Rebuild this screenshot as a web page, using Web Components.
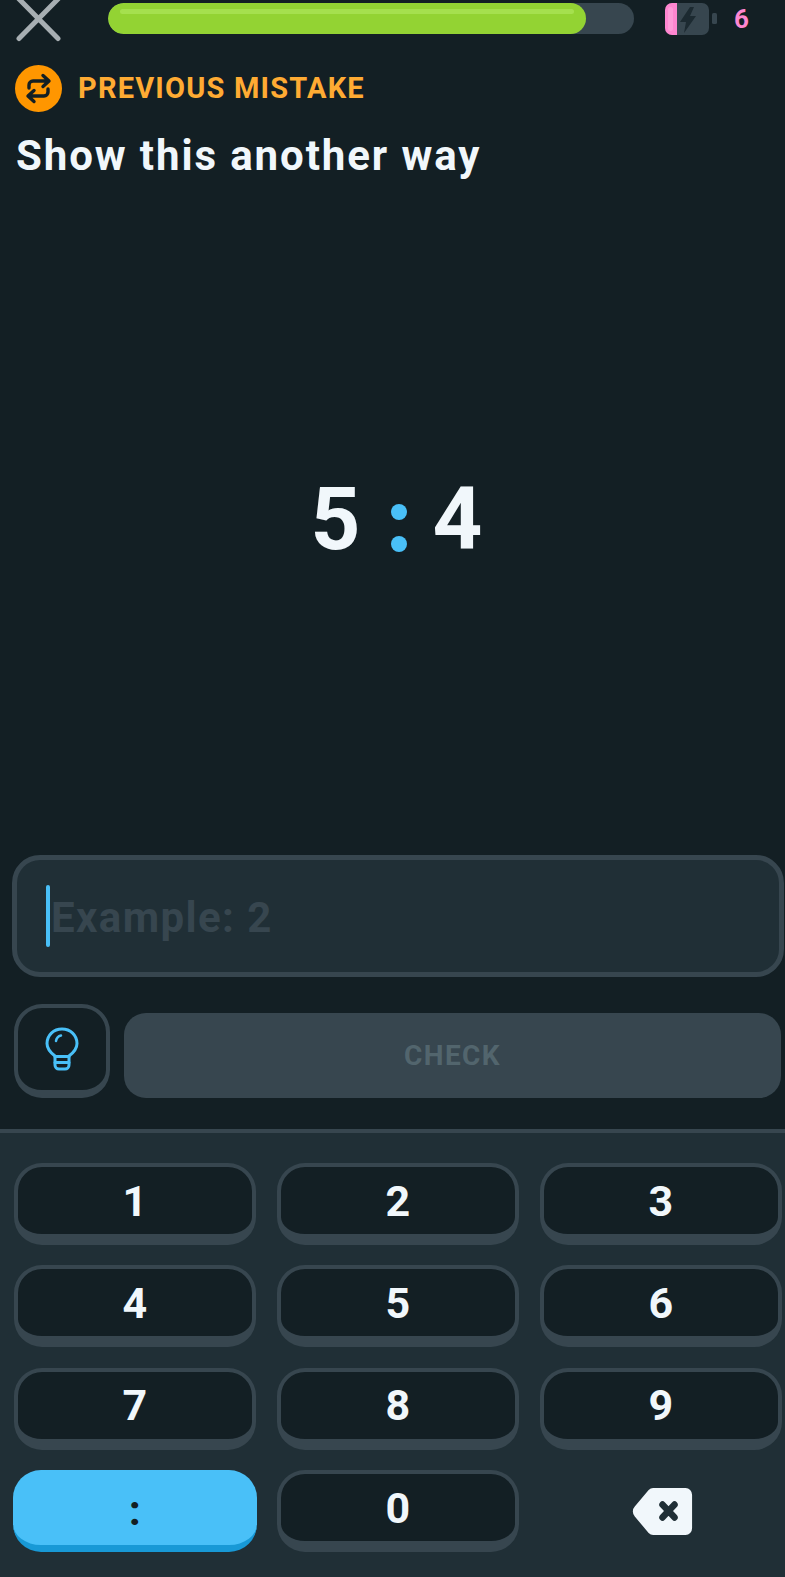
<!DOCTYPE html>
<html><head><meta charset="utf-8">
<style>
html,body{margin:0;padding:0;background:#131f24;}
body{width:785px;height:1577px;overflow:hidden;font-family:"Roboto","Liberation Sans",sans-serif;font-weight:700;}
</style></head><body>
<lesson-screen>
  <top-bar slot="top"></top-bar>
  <mistake-tag slot="top"></mistake-tag>
  <h-title slot="top">Show this another way</h-title>
  <ratio-display slot="mid"></ratio-display>
  <answer-input slot="bottom" placeholder="Example: 2"></answer-input>
  <action-row slot="bottom"></action-row>
  <num-pad slot="pad">
    <pad-key>1</pad-key><pad-key>2</pad-key><pad-key>3</pad-key>
    <pad-key>4</pad-key><pad-key>5</pad-key><pad-key>6</pad-key>
    <pad-key>7</pad-key><pad-key>8</pad-key><pad-key>9</pad-key>
    <pad-key active>:</pad-key><pad-key>0</pad-key><pad-key plain>
      <svg width="61" height="49" viewBox="0 0 66 50" preserveAspectRatio="none"><path d="M23 1H58a7 7 0 0 1 7 7V42a7 7 0 0 1-7 7H23a7 7 0 0 1-5-2L3 30a7 7 0 0 1 0-10L18 3a7 7 0 0 1 5-2Z" fill="#f1f7fb"/><path d="M33 18L46 31M46 18L33 31" stroke="#202f36" stroke-width="7" stroke-linecap="round"/></svg>
    </pad-key>
  </num-pad>
</lesson-screen>
<script>
function def(name, html){
  customElements.define(name, class extends HTMLElement{
    constructor(){super();this.attachShadow({mode:'open'}).innerHTML=typeof html==='function'?html(this):html;}
  });
}
def('lesson-screen',`<style>
:host{display:flex;flex-direction:column;width:785px;height:1577px;overflow:hidden}
.top{display:block;flex:none}
.mid{flex:1;display:flex;min-height:0}
.bottom{display:flex;flex-direction:column;flex:none}
</style>
<div class="top"><slot name="top"></slot></div>
<div class="mid"><slot name="mid"></slot></div>
<div class="bottom"><slot name="bottom"></slot></div>
<slot name="pad"></slot>`);
def('top-bar',`<style>
:host{display:flex;align-items:flex-start;height:42px;padding-left:16px;overflow:hidden}
svg{display:block;flex:none}
.x{margin-right:46px}
.track{width:526px;height:31px;margin-top:3px;border-radius:16px;background:#37464f;flex:none;overflow:hidden}
.fill{width:478px;height:100%;border-radius:16px;background:#93d333;position:relative}
.fill i{position:absolute;left:12px;right:12px;top:6px;height:5px;border-radius:3px;background:#a5e04e}
.bat{margin-left:31px;margin-top:3px}
.n{margin-left:16px;margin-top:1px;font-size:26px;line-height:36px;color:#ff86d0;font-family:"Roboto",sans-serif}
</style>
<svg class="x" width="46" height="42" viewBox="0 0 46 42"><path d="M3 38.500L42 -1M3 -1L42 38.500" stroke="#a7aeb2" stroke-width="5" stroke-linecap="round"/></svg>
<div class="track"><div class="fill"><i></i></div></div>
<svg class="bat" width="53" height="33" viewBox="0 0 53 33"><rect x="0" y="0" width="44" height="32" rx="7" fill="#37464f"/><path d="M7 0H12V32H7a7 7 0 0 1-7-7V7a7 7 0 0 1 7-7Z" fill="#ff86d0"/><rect x="3" y="4" width="5" height="24" rx="2.500" fill="#ffa8dd" opacity=".6"/><path d="M25 4L15 19H21L19 30L31 13H25L29 4Z" fill="#1c2a31"/><rect x="47" y="10" width="5" height="11" rx="1.500" fill="#37464f"/></svg>
<span class="n">6</span>`);
def('mistake-tag',`<style>
:host{display:flex;align-items:center;height:47px;margin-top:23px;padding-left:15px;gap:16px;color:#ffab33;font-size:29px;letter-spacing:1.200px;line-height:47px}
svg{display:block;flex:none}
</style>
<svg width="47" height="47" viewBox="0 0 47 47"><circle cx="23.500" cy="23.500" r="23.500" fill="#ff9600"/><path d="M14 23V20a4 4 0 0 1 4-4H33M28 10.500L34 16L28 21.500M33 24V27a4 4 0 0 1-4 4H14M19 25.500L13 31L19 36.500" fill="none" stroke="#131f24" stroke-width="3.400" stroke-linecap="round" stroke-linejoin="round"/></svg>
<span>PREVIOUS MISTAKE</span>`);
def('h-title',`<style>
:host{display:block;margin-top:19px;margin-bottom:1px;padding-left:16px;font-size:42px;line-height:50px;color:#f1f7fb;letter-spacing:1.900px}
</style><slot></slot>`);
def('ratio-display',`<style>
:host{flex:1;display:flex;justify-content:center;padding-top:287px;box-sizing:border-box;color:#f1f7fb;font-size:87px;line-height:100px}
.r{display:flex;height:100px;align-items:center;margin-left:8px}
.d{display:flex;flex-direction:column;gap:16px;margin:17px 26px 0 30px}
.d i{display:block;width:16px;height:16px;border-radius:50%;background:#49c0f8}
</style>
<div class="r"><span>5</span><div class="d"><i></i><i></i></div><span>4</span></div>`);
def('answer-input',el=>`<style>
:host{display:flex;align-items:center;box-sizing:border-box;height:122px;margin-left:12px;margin-right:1px;border:5px solid #37464f;border-radius:28px;background:#202f36;padding-left:29px;color:#37464f;font-size:42px;letter-spacing:1.400px}
.c{width:4px;height:62px;border-radius:2px;background:#49c0f8;flex:none;margin-right:1px}
span{margin-top:2px}
</style><div class="c"></div><span>${el.getAttribute('placeholder')}</span>`);
def('action-row',`<style>
:host{display:flex;align-items:flex-end;height:94px;margin-top:27px;margin-bottom:31px;padding-left:14px;padding-right:4px;gap:14px}
.h{box-sizing:border-box;width:96px;height:94px;flex:none;border:4px solid #37464f;border-bottom-width:8px;border-radius:28px;display:flex;align-items:center;justify-content:center}
.c{flex:1;height:85px;border-radius:22px;background:#37464f;color:#52656d;font-size:28px;letter-spacing:1.400px;display:flex;align-items:center;justify-content:center}
svg{display:block}
</style>
<div class="h"><svg width="34" height="44" viewBox="0 0 34 44" fill="none" stroke="#49c0f8" stroke-width="3" stroke-linecap="round" stroke-linejoin="round"><path d="M10 29C6 26 2 22 2 16.500C2 8 8.700 2 17 2S32 8 32 16.500C32 22 28 26 24 29V38a4 4 0 0 1-4 4H14a4 4 0 0 1-4-4Z"/><path d="M10 29.500H24M10 35.500H24"/><path d="M11 14C11.500 11 13.500 9 16 8.500" stroke-width="2.500"/></svg></div>
<div class="c">CHECK</div>`);
def('num-pad',`<style>
:host{display:grid;grid-template-columns:repeat(3,242.5px);grid-auto-rows:82px;column-gap:20.500px;row-gap:20.400px;flex:none;box-sizing:border-box;background:#202f36;border-top:4px solid #37464f;padding:30px 0 0 13.500px;height:448px;align-content:start}
</style><slot></slot>`);
customElements.define('pad-key',class extends HTMLElement{
  constructor(){super();this.attachShadow({mode:'open'}).innerHTML=`<style>
:host{display:flex;align-items:center;justify-content:center;box-sizing:border-box;height:82px;border:4px solid #37464f;border-bottom-width:11px;border-radius:28px;background:#131f24;color:#f1f7fb;font-size:43px;padding-top:0}
:host([active]){background:#49c0f8;border:0;border-bottom:7px solid #1899d6;color:#131f24;margin:0 -1px;height:82px;padding-top:4px}
:host([plain]){background:none;border:0;padding:0 0 0 3px}
</style><slot></slot>`;}
});
</script>
</body></html>
